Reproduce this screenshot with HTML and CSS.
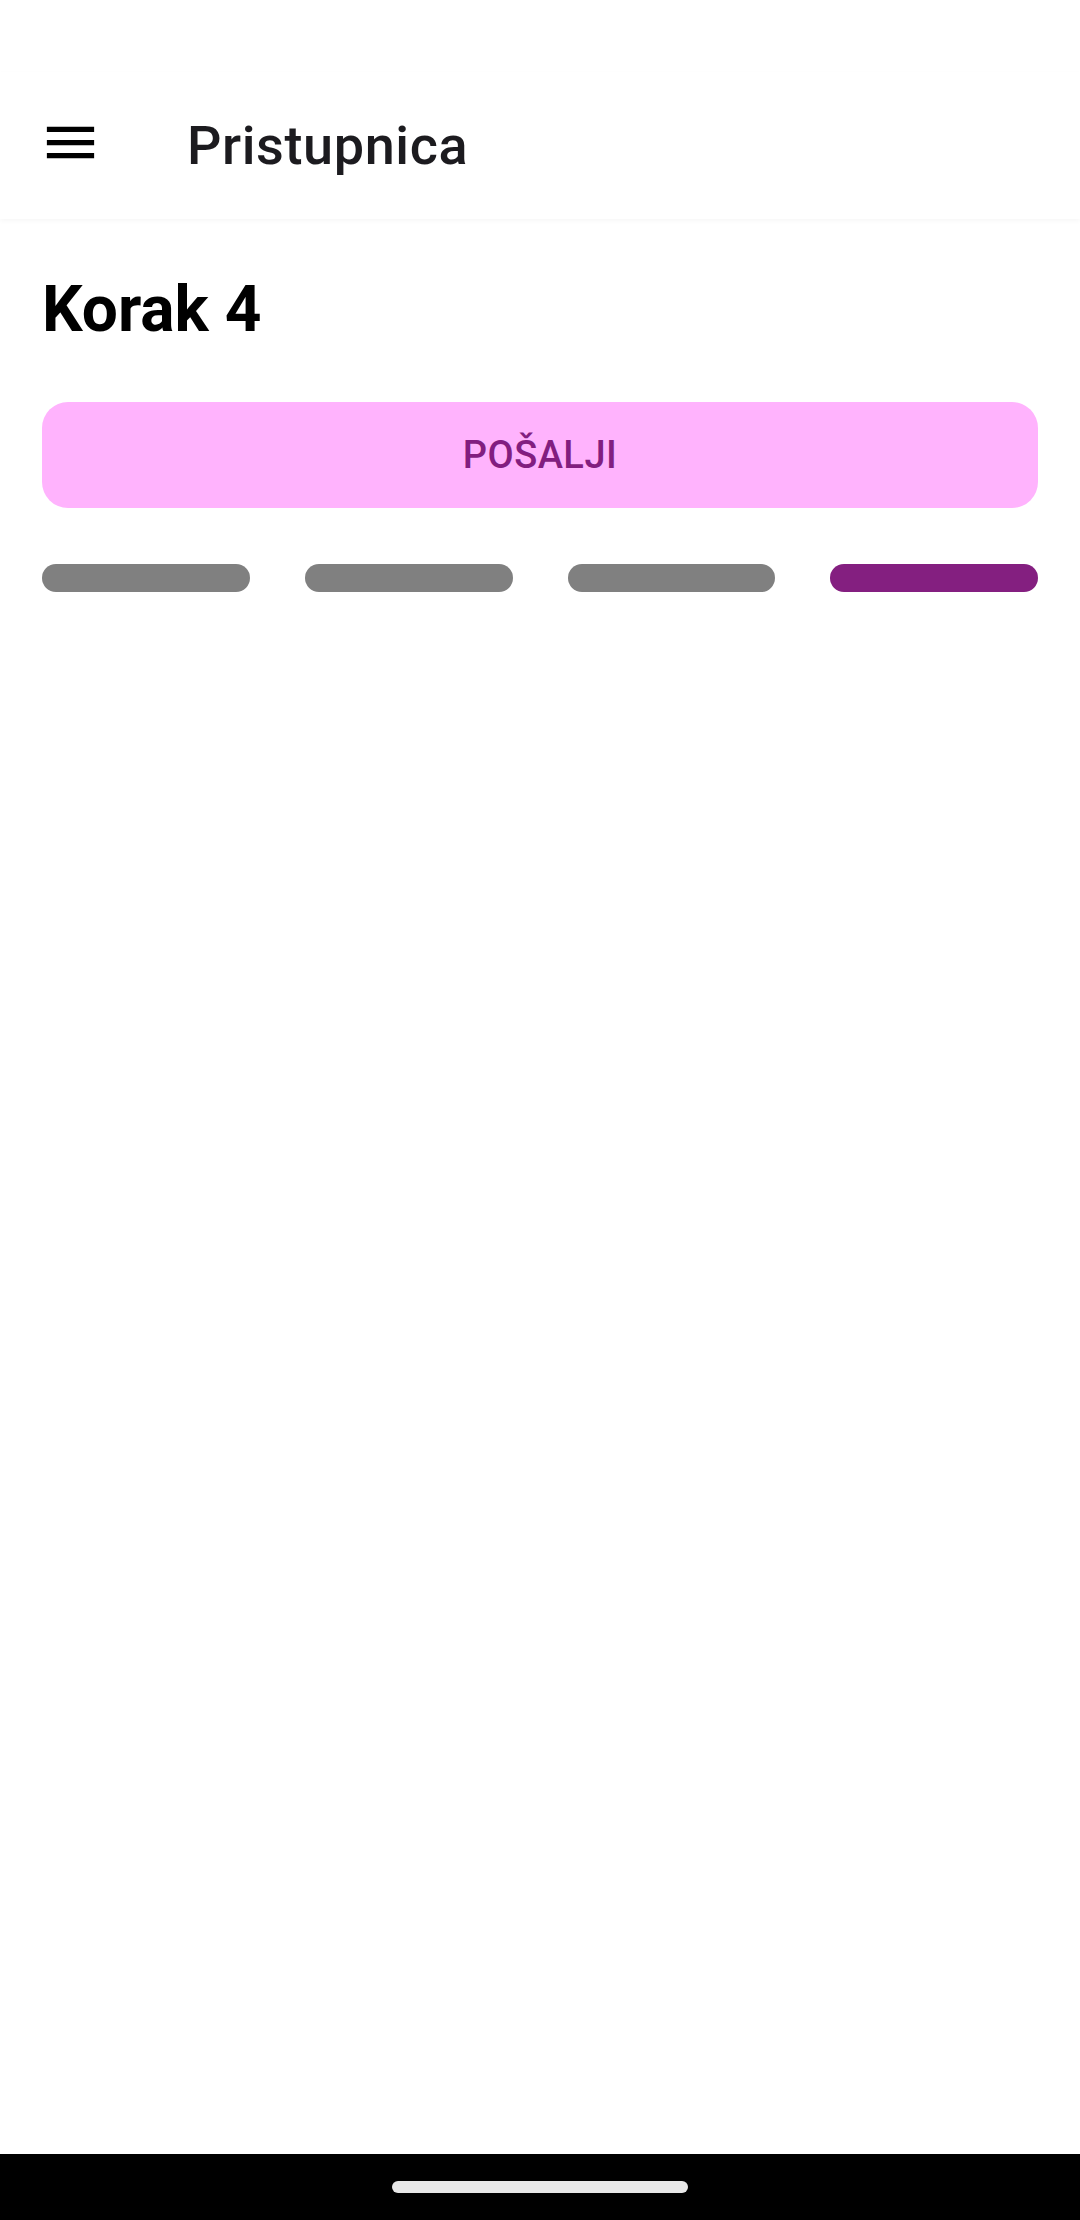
FILE: index.html
```html
<!DOCTYPE html>
<html lang="hr">
<head>
<meta charset="utf-8">
<title>Pristupnica</title>
<link rel="stylesheet" href="styles.css">
</head>
<body>
<div class="screen">
  <div class="statusbar"></div>
  <header class="appbar">
    <div class="nav-icon">
      <svg width="63" height="63" viewBox="0 0 24 24"><path d="M3 18h18v-2H3v2zm0-5h18v-2H3v2zm0-7v2h18V6H3z" fill="#000"/></svg>
    </div>
    <h1 class="title">Pristupnica</h1>
  </header>
  <main class="content">
    <h2 class="step">Korak 4</h2>
    <button class="send">POŠALJI</button>
    <div class="progress">
      <span class="seg"></span>
      <span class="seg"></span>
      <span class="seg"></span>
      <span class="seg active"></span>
    </div>
  </main>
  <div class="navbar"><span class="pill"></span></div>
</div>
</body>
</html>
```

FILE: styles.css
```css
html, body {
  margin: 0;
  padding: 0;
  background: #fff;
}
.screen {
  width: 1080px;
  height: 2220px;
  display: flex;
  flex-direction: column;
  font-family: Roboto, "Noto Sans", sans-serif;
  background: #fff;
}
.statusbar {
  height: 72px;
  flex: none;
}
.appbar {
  height: 147px;
  flex: none;
  display: flex;
  align-items: center;
  background: #fff;
  box-shadow: 0 2px 5px rgba(0, 0, 0, 0.035);
  position: relative;
  z-index: 1;
}
.nav-icon {
  width: 63px;
  height: 63px;
  margin-left: 39px;
  margin-top: -6px;
  display: flex;
}
.title {
  margin: 0 0 0 85px;
  font-size: 54px;
  font-weight: 500;
  letter-spacing: 0.6px;
  color: #1c1b1f;
  line-height: 1;
}
.content {
  flex: 1;
  padding: 0 42px;
  display: flex;
  flex-direction: column;
}
.step {
  margin: 53px 0 0 0;
  font-size: 64px;
  line-height: 75px;
  font-weight: 700;
  color: #000;
}
.send {
  margin-top: 55px;
  height: 106px;
  border: none;
  border-radius: 26px;
  background: #ffb3fd;
  color: #821e80;
  font-family: Roboto, "Noto Sans", sans-serif;
  font-weight: 500;
  font-size: 38px;
  letter-spacing: 0.5px;
  padding: 0;
}
.progress {
  margin-top: 56px;
  display: flex;
  gap: 55px;
}
.seg {
  flex: 1;
  height: 28px;
  border-radius: 14px;
  background: #808080;
}
.seg.active {
  background: #841f80;
}
.navbar {
  height: 66px;
  flex: none;
  background: #000;
  display: flex;
  justify-content: center;
  align-items: flex-start;
}
.pill {
  margin-top: 27px;
  width: 296px;
  height: 12px;
  border-radius: 6px;
  background: #e8e8e8;
}
```
